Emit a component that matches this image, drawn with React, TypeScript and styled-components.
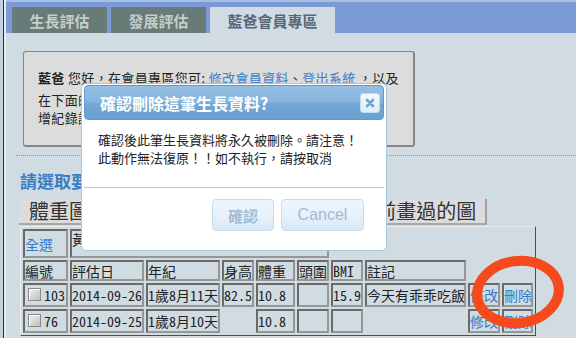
import styled, { createGlobalStyle } from "styled-components";

const CJK = `"Noto Sans CJK TC", "Noto Sans CJK SC", "Noto Sans", sans-serif`;

const GlobalStyle = createGlobalStyle`
  html, body {
    margin: 0;
    padding: 0;
  }
  body {
    background: #d0dce2;
    font-family: ${CJK};
    color: #222;
    overflow: hidden;
  }
`;

const Shell = styled.div`
  position: relative;
  display: flex;
  width: 576px;
  height: 338px;
  overflow: hidden;
`;

const Rail = styled.div`
  width: 6px;
  flex: none;
  background: linear-gradient(
    to right,
    #c3d0dd 0 3px,
    #24304a 3px 4px,
    #e2eaf2 4px 6px
  );
`;

const Main = styled.div`
  flex: 1;
  min-width: 0;
  background: #d0dce2;
`;

const TabBar = styled.div`
  height: 33px;
  box-sizing: border-box;
  background: #7a9ad6;
  border-top: 2px solid #a9bde6;
  display: flex;
  align-items: flex-end;
  gap: 4px;
  padding-left: 6px;
`;

const Tab = styled.div<{ $active?: boolean; $w: number }>`
  width: ${(p) => p.$w}px;
  height: 26px;
  display: flex;
  align-items: center;
  justify-content: center;
  background: ${(p) => (p.$active ? "#d0dce2" : "#687b77")};
  color: ${(p) => (p.$active ? "#56677a" : "#c5cdcd")};
  font: bold 15px ${CJK};
`;

const MemberBox = styled.div`
  margin: 18px 0 0 17px;
  width: 392px;
  height: 96px;
  box-sizing: border-box;
  background: #dcdcdc;
  border: 1px solid #858585;
  border-right-width: 2px;
  border-bottom-width: 2px;
  border-radius: 3px;
  padding: 17px 0 0 14px;
  font-size: 13px;
  line-height: 18px;
  letter-spacing: 0.35px;
  p {
    margin: 0 0 4px;
    white-space: nowrap;
  }
  b {
    font-weight: bold;
  }
`;

const Link = styled.a`
  color: #3d7cc9;
  text-decoration: underline;
`;

const Divider = styled.div`
  margin: 8px 0 0 10px;
  border-top: 1px dotted #9a9a9a;
`;

const Heading = styled.h2`
  margin: 16px 0 0 14px;
  font: bold 17px/18px ${CJK};
  color: #3a7dc6;
`;

const ChartBar = styled.div`
  margin: 9px 0 0 13px;
  display: flex;
  gap: 2px;
`;

const ChartButton = styled.div`
  height: 26px;
  box-sizing: border-box;
  padding: 0 9px 0 10px;
  background: #dcdcdc;
  border-right: 2px solid #a0a0a0;
  border-bottom: 2px solid #a8a8a8;
  font: 20px/24px ${CJK};
  color: #333;
  white-space: nowrap;
`;

const Grid = styled.div`
  margin: 1px 0 0 14px;
  width: max-content;
  display: grid;
  grid-template-columns: 45px 74px 74px 32px 39px 32px 32px 101px 32px 31px;
  grid-template-rows: 29px 21px 24px 24px;
  gap: 2px;
  padding: 2px;
  border: 1px solid;
  border-color: #e6eaec #4e4e4e #4e4e4e #e6eaec;
  font: 14px/18px ${CJK};
  font-feature-settings: "hwid";
`;

const Cell = styled.div<{
  $bare?: boolean;
  $span?: number;
  $link?: boolean;
  $top?: boolean;
}>`
  box-sizing: border-box;
  grid-column: span ${(p) => p.$span ?? 1};
  border: 2px solid;
  border-color: ${(p) =>
    p.$bare ? "transparent" : "#6a6a6a #969696 #969696 #6a6a6a"};
  display: flex;
  align-items: ${(p) => (p.$top ? "flex-start" : "center")};
  line-height: ${(p) => (p.$top ? "16px" : "18px")};
  white-space: nowrap;
  overflow: hidden;
  color: ${(p) => (p.$link ? "#2f7bd0" : "#222")};
`;

const Check = styled.span`
  width: 13px;
  height: 13px;
  box-sizing: border-box;
  margin: 0 3px 2px 3px;
  border: 1px solid #8a8a8a;
  background: linear-gradient(135deg, #f2f2f2, #bdbdbd);
  box-shadow: inset 1px 1px 0 #fff;
`;

const Dialog = styled.div`
  position: absolute;
  left: 81px;
  top: 83px;
  width: 306px;
  height: 168px;
  box-sizing: border-box;
  background: #fff;
  border: 1px solid #a6c9e2;
  border-radius: 5px;
  padding: 1px 2px;
  display: flex;
  flex-direction: column;
  z-index: 10;
`;

const DialogHeader = styled.div`
  height: 35px;
  box-sizing: border-box;
  border: 1px solid #5c9ad2;
  border-radius: 4px;
  background: linear-gradient(
    to bottom,
    #95bfe3 0%,
    #88b6de 45%,
    #72a7d5 55%,
    #6aa0d2 100%
  );
  display: flex;
  align-items: center;
  justify-content: space-between;
  padding: 0 3px 0 15px;
`;

const DialogTitle = styled.span`
  color: #fff;
  font: bold 16px ${CJK};
`;

const CloseButton = styled.div`
  width: 20px;
  height: 20px;
  box-sizing: border-box;
  border: 1px solid #c5dbee;
  border-radius: 3px;
  background: linear-gradient(#f3f8fd, #e2eef9);
  display: flex;
  align-items: center;
  justify-content: center;
`;

const DialogBody = styled.div`
  height: 68px;
  box-sizing: border-box;
  padding: 11px 0 0 14px;
  border-bottom: 1px solid #a9cde9;
  font: 13px/18px ${CJK};
  color: #222;
`;

const DialogFooter = styled.div`
  display: flex;
  justify-content: flex-end;
  gap: 7px;
  padding: 11px 20px 0 0;
`;

const DialogButton = styled.div<{ $w: number; $latin?: boolean }>`
  width: ${(p) => p.$w}px;
  height: 32px;
  box-sizing: border-box;
  border: 1px solid #c5dcf0;
  border-radius: 4px;
  background: linear-gradient(#eef6fd 0%, #e7f1fb 50%, #d9e9f7 100%);
  color: #a2bbd4;
  display: flex;
  align-items: center;
  justify-content: center;
  font: ${(p) =>
    p.$latin ? `16px "Liberation Sans", sans-serif` : `bold 15px ${CJK}`};
`;

const Circle = styled.svg`
  position: absolute;
  left: 466px;
  top: 251px;
  z-index: 5;
`;

const rows = [
  {
    id: "103",
    date: "2014-09-26",
    age: "1歲8月11天",
    height: "82.5",
    weight: "10.8",
    head: "",
    bmi: "15.9",
    note: "今天有乖乖吃飯",
  },
  {
    id: "76",
    date: "2014-09-25",
    age: "1歲8月10天",
    height: null,
    weight: "10.8",
    head: "",
    bmi: "",
    note: null,
  },
];

const App = () => {
  return (
    <>
      <GlobalStyle />
      <Shell>
        <Rail />
        <Main>
          <TabBar>
            <Tab $w={95}>生長評估</Tab>
            <Tab $w={95}>發展評估</Tab>
            <Tab $w={125} $active>
              藍爸會員專區
            </Tab>
          </TabBar>

          <MemberBox>
            <p>
              <b>藍爸</b> 您好，在會員專區您可: <Link>修改會員資料</Link>、
              <Link>登出系統</Link> ，以及
            </p>
            <p>
              在下面的表格中檢視、修改或刪除寶寶的生長紀錄，或新
              <br />
              增紀錄請按「新增」。
            </p>
          </MemberBox>

          <Divider />
          <Heading>請選取要繪製的圖表</Heading>

          <ChartBar>
            <ChartButton>體重圖</ChartButton>
            <ChartButton>身高圖</ChartButton>
            <ChartButton>頭圍圖</ChartButton>
            <ChartButton>BMI圖</ChartButton>
            <ChartButton>以前畫過的圖</ChartButton>
          </ChartBar>

          <Grid>
            <Cell $link>全選</Cell>
            <Cell $span={5} $top>
              黃小寶的生長紀錄
            </Cell>
            <Cell $bare $span={4} />

            <Cell>編號</Cell>
            <Cell>評估日</Cell>
            <Cell>年紀</Cell>
            <Cell>身高</Cell>
            <Cell>體重</Cell>
            <Cell>頭圍</Cell>
            <Cell>BMI</Cell>
            <Cell>註記</Cell>
            <Cell $bare />
            <Cell $bare />

            {rows.map((r) => (
              <>
                <Cell key={r.id + "id"}>
                  <Check />
                  {r.id}
                </Cell>
                <Cell>{r.date}</Cell>
                <Cell>{r.age}</Cell>
                <Cell $bare={r.height === null}>{r.height}</Cell>
                <Cell>{r.weight}</Cell>
                <Cell>{r.head}</Cell>
                <Cell>{r.bmi}</Cell>
                <Cell $bare={r.note === null}>{r.note}</Cell>
                <Cell $link>修改</Cell>
                <Cell $link>刪除</Cell>
              </>
            ))}
          </Grid>
        </Main>

        <Dialog>
          <DialogHeader>
            <DialogTitle>確認刪除這筆生長資料?</DialogTitle>
            <CloseButton>
              <svg width="10" height="10" viewBox="0 0 10 10">
                <path
                  d="M2 2 L8 8 M8 2 L2 8"
                  stroke="#6da2d3"
                  strokeWidth="2.6"
                  strokeLinecap="round"
                />
              </svg>
            </CloseButton>
          </DialogHeader>
          <DialogBody>
            確認後此筆生長資料將永久被刪除。請注意！
            <br />
            此動作無法復原！！如不執行，請按取消
          </DialogBody>
          <DialogFooter>
            <DialogButton $w={62}>確認</DialogButton>
            <DialogButton $w={83} $latin>
              Cancel
            </DialogButton>
          </DialogFooter>
        </Dialog>

        <Circle width="104" height="84" viewBox="0 0 104 84">
          <ellipse
            cx="52"
            cy="41"
            rx="41"
            ry="31"
            fill="none"
            stroke="#f44a1c"
            strokeWidth="10"
            transform="rotate(-8 52 41)"
          />
        </Circle>
      </Shell>
    </>
  );
};

export default App;
